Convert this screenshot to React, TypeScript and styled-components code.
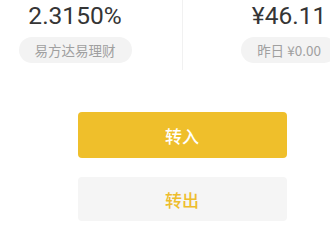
import * as React from 'react';
import styled, {createGlobalStyle} from 'styled-components';

const GlobalStyle = createGlobalStyle`
  html, body {
    margin: 0;
    padding: 0;
    background: #ffffff;
    overflow: hidden;
  }
  body {
    font-family: Roboto, "Noto Sans CJK SC", sans-serif;
  }
`;

const View = styled.div`
  width: 330px;
  height: 225px;
  background: #ffffff;
  overflow: hidden;
`;

const Screen = styled.div`
  width: 364px;
`;

const Summary = styled.div`
  display: flex;
  align-items: stretch;
  height: 70px;
`;

const Cell = styled.div<{$width: number}>`
  display: flex;
  flex-direction: column;
  align-items: center;
  flex: 0 0 ${p => p.$width}px;
`;

const Divider = styled.div`
  flex: 0 0 1px;
  margin-left: 32px;
  background: #f1f1f1;
`;

const Amount = styled.div`
  font-family: Roboto, sans-serif;
  font-size: 24.5px;
  line-height: 30px;
  color: #353535;
  padding-top: 1px;
`;

const Tag = styled.div`
  margin-top: 6px;
  height: 26px;
  line-height: 26px;
  padding: 0 16px;
  border-radius: 13px;
  background: #f3f3f3;
  color: #a0a0a0;
  font-size: 13.5px;
  font-family: "Noto Sans CJK SC", Roboto, sans-serif;
  white-space: nowrap;
`;

const Actions = styled.div`
  display: flex;
  flex-direction: column;
  align-items: center;
  gap: 19px;
  margin-top: 42px;
`;

const Button = styled.div<{$primary?: boolean}>`
  width: 209px;
  height: ${p => (p.$primary ? 46 : 44)}px;
  border-radius: 4px;
  display: flex;
  align-items: center;
  justify-content: center;
  background: ${p => (p.$primary ? '#efbf2b' : '#f5f5f5')};
  color: ${p => (p.$primary ? '#ffffff' : '#eebd2c')};
  font-family: "Noto Sans CJK SC", sans-serif;
  font-size: 17px;
  font-weight: 500;
`;

export default function App() {
  return (
    <View>
      <GlobalStyle />
      <Screen>
        <Summary>
          <Cell $width={150}>
            <Amount>2.3150%</Amount>
            <Tag>易方达易理财</Tag>
          </Cell>
          <Divider />
          <Cell $width={212}>
            <Amount>¥46.11</Amount>
            <Tag>昨日 ¥0.00</Tag>
          </Cell>
        </Summary>
        <Actions>
          <Button $primary>转入</Button>
          <Button>转出</Button>
        </Actions>
      </Screen>
    </View>
  );
}
